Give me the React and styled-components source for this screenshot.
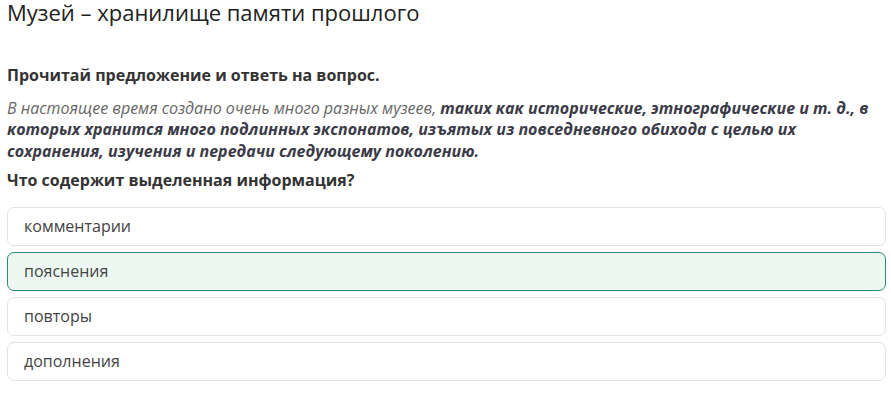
import React from "react";
import styled, { createGlobalStyle } from "styled-components";

const Global = createGlobalStyle`
  html, body { margin: 0; padding: 0; background: #fff; }
  body { font-family: "Open Sans", "Noto Sans", sans-serif; }
`;

const Page = styled.div`
  padding: 0 5px 0 7px;
  display: flex;
  flex-direction: column;
`;

const Title = styled.h1`
  margin: 0;
  font-size: 22px;
  line-height: 24px;
  font-weight: 400;
  color: #222;
`;

const Heading = styled.p`
  margin: ${(p) => p.$top}px 0 0;
  font-size: 16px;
  line-height: 21.6px;
  font-weight: 700;
  color: #333;
`;

const Passage = styled.p`
  margin: 11px 0 0;
  font-size: 16px;
  line-height: 21.6px;
  font-style: italic;
  color: #666;
`;

const Marked = styled.b`
  font-weight: 700;
  color: #3b3b48;
`;

const Options = styled.div`
  margin-top: 15px;
  display: flex;
  flex-direction: column;
  gap: 6px;
`;

const Option = styled.div`
  border: 1px solid ${(p) => (p.$selected ? "#2d8a78" : "#e2e2e2")};
  background: ${(p) => (p.$selected ? "#edf8f3" : "#fff")};
  border-radius: 7px;
  padding: 7px 16px;
  font-size: 16px;
  line-height: 23px;
  color: #444;
`;

const options = ["комментарии", "пояснения", "повторы", "дополнения"];

export default function App() {
  return (
    <>
      <Global />
      <Page>
        <Title>Музей – хранилище памяти прошлого</Title>
        <Heading $top={41}>Прочитай предложение и ответь на вопрос.</Heading>
        <Passage>
          В настоящее время создано очень много разных музеев,{" "}
          <Marked>
            таких как исторические, этнографические и т. д., в которых хранится много
            подлинных экспонатов, изъятых из повседневного обихода с целью их
            сохранения, изучения и передачи следующему поколению.
          </Marked>
        </Passage>
        <Heading $top={8}>Что содержит выделенная информация?</Heading>
        <Options>
          {options.map((o) => (
            <Option key={o} $selected={o === "пояснения"}>
              {o}
            </Option>
          ))}
        </Options>
      </Page>
    </>
  );
}
